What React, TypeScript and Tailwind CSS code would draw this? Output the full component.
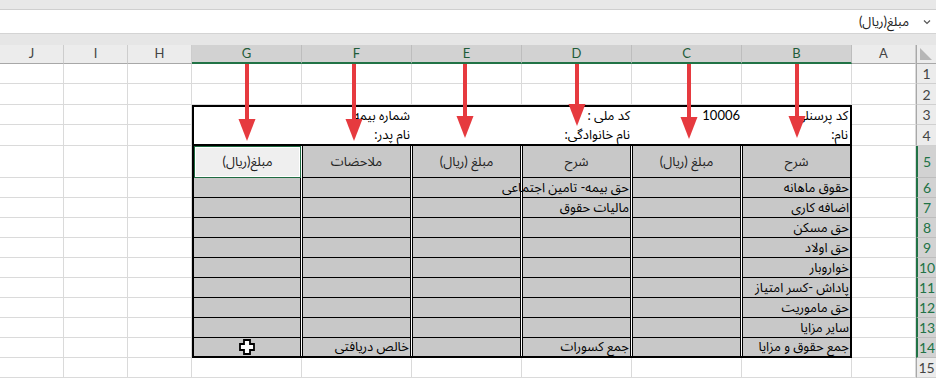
import React from "react";

const cols = ["J", "I", "H", "G", "F", "E", "D", "C", "B", "A"];
const selCols = new Set(["G", "F", "E", "D", "C", "B"]);

const bodyB = [
  "حقوق ماهانه",
  "اضافه کاری",
  "حق مسکن",
  "حق اولاد",
  "خواروبار",
  "پاداش -کسر امتیاز",
  "حق ماموریت",
  "سایر مزایا",
  "جمع حقوق و مزایا",
];

const headers5 = ["مبلغ(ریال)", "ملاحضات", "مبلغ (ریال)", "شرح", "مبلغ (ریال)", "شرح"];

function GridCell() {
  return <div className="bg-white border-r border-b border-[#dadada]" />;
}

function ColHeader({ c }: { c: string }) {
  const sel = selCols.has(c);
  return (
    <div
      className={
        sel
          ? "flex items-center justify-center bg-[#d2d2d2] text-[#1f5c39] text-[13px] border-r border-[#bdbdbd] border-b-2 border-b-[#217346]"
          : "flex items-center justify-center bg-[#ececec] text-[#444] text-[13px] border-r border-[#cdcdcd] border-b border-b-[#a8a8a8]"
      }
    >
      {c}
    </div>
  );
}

function RowHeader({ n }: { n: number }) {
  const sel = n >= 5 && n <= 14;
  return (
    <div
      className={
        sel
          ? "flex items-center justify-center bg-[#d2d2d2] text-[#217346] text-[14px] border-l-2 border-[#217346] border-b border-b-[#bdbdbd]"
          : "flex items-center justify-center bg-[#ececec] text-[#444] text-[14px] border-l border-[#a8a8a8] border-b border-b-[#d0d0d0]"
      }
    >
      {n}
    </div>
  );
}

function TopBox() {
  const t = (s: string) => (
    <div dir="rtl" className="flex items-center pr-[2px] whitespace-nowrap text-[13px] text-black">
      {s}
    </div>
  );
  const e = () => <div />;
  return (
    <div className="col-start-4 col-span-6 row-start-4 row-span-2 bg-white border-2 border-black grid grid-cols-[108px_110px_110px_110px_110px_108px] grid-rows-[18px_19px]">
      {e()}
      {t("شماره بیمه")}
      {e()}
      {t("کد ملی :")}
      <div className="flex items-center justify-end pr-[2px] whitespace-nowrap text-[13px] text-black">10006</div>
      {t("کد پرسنلی")}
      {e()}
      {t("نام پدر:")}
      {e()}
      {t("نام خانوادگی:")}
      {e()}
      {t("نام:")}
    </div>
  );
}

function BodyTable() {
  const rows: React.ReactNode[] = [];
  headers5.forEach((h, i) => {
    if (i === 0) {
      rows.push(
        <div
          key={"h" + i}
          dir="rtl"
          className="flex items-center justify-center bg-[#efefef] border border-[#1f6b41] shadow-[inset_0_0_0_1px_#ffffff] text-[13px] text-[#222] whitespace-nowrap"
        >
          {h}
        </div>
      );
    } else {
      rows.push(
        <div
          key={"h" + i}
          dir="rtl"
          className={
            "flex items-center justify-center bg-[#c8c8c8] border-b border-black border-l text-[13px] text-[#222] whitespace-nowrap " +
            (i === 5 ? "" : "border-r")
          }
        >
          {h}
        </div>
      );
    }
  });
  for (let r = 0; r < 9; r++) {
    const last = r === 8;
    const content: (string | null)[] = [null, null, null, null, null, bodyB[r]];
    if (r === 0) content[3] = "حق بیمه- تامین اجتماعی";
    if (r === 1) content[3] = "مالیات حقوق";
    if (r === 8) {
      content[3] = "جمع کسورات";
      content[1] = "خالص دریافتی";
    }
    content.forEach((c, i) => {
      const cls =
        "flex items-center pr-[1px] bg-[#c8c8c8] border-black whitespace-nowrap text-[13px] text-black " +
        (last ? "" : "border-b ") +
        (i === 0 ? "" : "border-l ") +
        (i === 5 ? "" : "border-r");
      rows.push(
        <div key={r + "-" + i} dir="rtl" className={cls}>
          {c}
        </div>
      );
    });
  }
  return (
    <div className="col-start-4 col-span-6 row-start-6 row-span-10 bg-white border-x-2 border-b-2 border-black grid grid-cols-[107px_109px_109px_109px_109px_108px] grid-rows-[32px_repeat(8,20px)_18px] gap-x-px">
      {rows}
    </div>
  );
}

function Arrows() {
  const arrows = [
    [247, 141],
    [354, 141],
    [465, 138],
    [577, 126],
    [689, 139],
    [797, 138],
  ];
  return (
    <svg className="absolute left-0 top-0 pointer-events-none" width="936" height="379" viewBox="0 0 936 379">
      {arrows.map(([x, tip]) => (
        <g key={x} fill="#e63a3f">
          <rect x={x - 2} y={64} width={4} height={tip - 64 - 18} />
          <polygon points={`${x - 8.5},${tip - 22} ${x + 8.5},${tip - 22} ${x},${tip}`} />
        </g>
      ))}
      <g transform="translate(239,339)">
        <path
          d="M5 1 H11 V5 H15 V11 H11 V15 H5 V11 H1 V5 H5 Z"
          fill="#fff"
          stroke="#000"
          strokeWidth="1.8"
          strokeLinejoin="miter"
        />
      </g>
    </svg>
  );
}

export default function App() {
  const cells: React.ReactNode[] = [];
  cols.forEach((c) => cells.push(<ColHeader key={"ch" + c} c={c} />));
  cells.push(
    <div key="corner" className="relative bg-[#ececec] border-b border-b-[#a8a8a8] border-l border-[#a8a8a8]">
      <svg className="absolute left-[3px] bottom-[3px]" width="12" height="12" viewBox="0 0 12 12">
        <polygon points="0,0 0,12 12,12" fill="#b6b6b6" />
      </svg>
    </div>
  );
  for (let r = 1; r <= 15; r++) {
    const covered = r >= 3 && r <= 14;
    cols.forEach((c) => {
      if (covered && selCols.has(c)) return;
      cells.push(<GridCell key={r + c} />);
    });
    cells.push(<RowHeader key={"rh" + r} n={r} />);
  }

  return (
    <div className="relative w-[936px] h-[379px] overflow-hidden bg-white font-['Lato','Noto_Sans_Arabic','DejaVu_Sans',sans-serif]">
      <div className="h-[10px] bg-[#e8e8e8] border-b border-[#cfcfcf]" />
      <div className="h-[24px] bg-white border-b border-[#d4d4d4] flex items-center justify-end pr-[5px] gap-[14px]">
        <span dir="rtl" className="text-[13px] text-[#222] whitespace-nowrap">
          مبلغ(ریال)
        </span>
        <svg width="8" height="6" viewBox="0 0 8 6">
          <path d="M1 1.5 L4 4.5 L7 1.5" fill="none" stroke="#555" strokeWidth="1.2" />
        </svg>
      </div>
      <div className="h-[11px] bg-[#e6e6e6]" />
      <div className="grid grid-cols-[64px_64px_64px_110px_110px_110px_110px_110px_110px_64px_20px] grid-rows-[19px_20px_21px_20px_21px_32px_repeat(10,20px)]">
        {cells}
        <TopBox />
        <BodyTable />
      </div>
      <Arrows />
    </div>
  );
}
